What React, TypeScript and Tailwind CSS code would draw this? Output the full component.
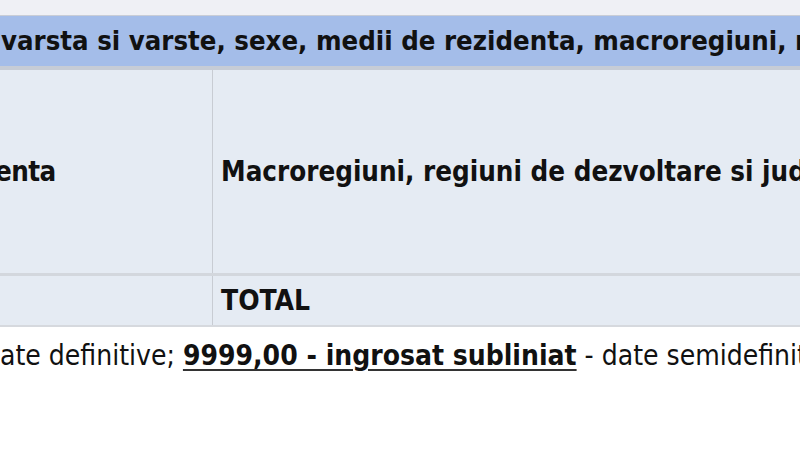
import React from "react";

export default function App() {
  const font = { fontFamily: '"DejaVu Sans Condensed", "DejaVu Sans", sans-serif' };
  return (
    <div className="w-[800px] h-[450px] overflow-hidden bg-white text-black" style={font}>
      <div className="h-[15px] bg-[#eff0f5]" />
      <div className="h-[55px] bg-[#a4bde9] border-t border-[#c9cdd6] border-b-[4px] border-b-[#c6ccd6] flex items-center whitespace-nowrap overflow-hidden">
        <span className="text-[27.3px] font-bold leading-none pl-[1px] text-[#111]">
          varsta si varste, sexe, medii de rezidenta, macroregiuni, regiuni de dezvoltare si judete
        </span>
      </div>
      <div className="bg-[#e5ebf3]">
        <div className="flex h-[206px] border-b-[3px] border-[#d3d7dd]">
          <div className="w-[213px] shrink-0 border-r border-[#c8ccd3] flex items-center overflow-hidden">
            <span className="text-[27.5px] font-bold whitespace-nowrap ml-[-5px] text-[#111] tracking-[-0.6px]">enta</span>
          </div>
          <div className="flex-1 flex items-center pl-[8px] whitespace-nowrap overflow-hidden">
            <span className="text-[27.5px] font-bold text-[#111]">Macroregiuni, regiuni de dezvoltare si judete</span>
          </div>
        </div>
        <div className="flex h-[51px] border-b-[2px] border-[#d6d9de]">
          <div className="w-[213px] shrink-0 border-r border-[#c8ccd3]" />
          <div className="flex-1 flex items-center pl-[8px]">
            <span className="text-[28px] font-bold text-[#111]">TOTAL</span>
          </div>
        </div>
      </div>
      <div className="bg-white pt-[8px] whitespace-nowrap overflow-hidden">
        <span className="text-[28px] text-[#111]">
          ate definitive; <span className="font-bold underline decoration-[2px] underline-offset-[4px] decoration-[#333]">9999,00 - ingrosat subliniat</span> - date semidefinitive
        </span>
      </div>
    </div>
  );
}
